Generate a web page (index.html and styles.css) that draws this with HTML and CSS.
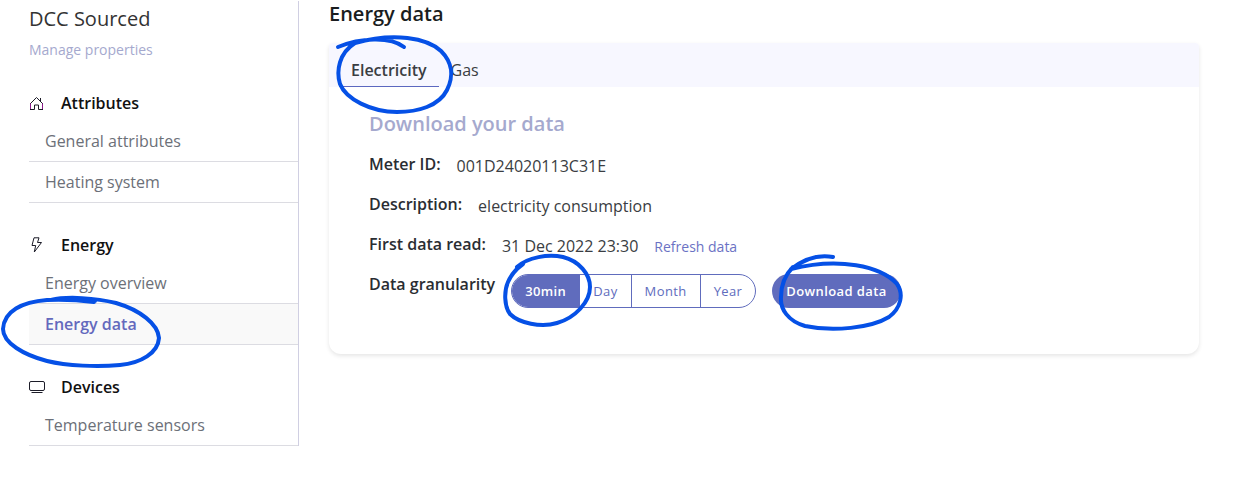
FILE: index.html
```html
<!DOCTYPE html>
<html lang="en">
<head>
<meta charset="utf-8">
<meta name="viewport" content="width=device-width, initial-scale=1">
<title>Energy data</title>
<link rel="stylesheet" href="styles.css">
</head>
<body>
<div class="page">
  <nav class="sidebar" aria-label="Property">
    <h2 class="property">DCC Sourced</h2>
    <a class="manage" href="#">Manage properties</a>
    <section class="group">
      <h3 class="group-title">
        <svg class="icon" viewBox="0 0 16 16" aria-hidden="true"><path stroke="#8c1a8c" d="M1.5 8v6M13.5 8v6"/><path d="M1 14.5h4.500v-4.500h4v4.500h4.500M1.500 8.500L7.500 2.500l6 6M11.500 6V3"/></svg>
        Attributes
      </h3>
      <ul class="items">
        <li><a class="item" href="#">General attributes</a></li>
        <li><a class="item" href="#">Heating system</a></li>
      </ul>
    </section>
    <section class="group">
      <h3 class="group-title">
        <svg class="icon" viewBox="0 0 16 16" aria-hidden="true"><path d="M5 .8h5L8.500 5.500h4L5.300 15l1.400-6.500H3z"/></svg>
        Energy
      </h3>
      <ul class="items">
        <li><a class="item" href="#">Energy overview</a></li>
        <li><a class="item active" href="#" aria-current="page">Energy data</a></li>
      </ul>
    </section>
    <section class="group">
      <h3 class="group-title">
        <svg class="icon" viewBox="0 0 16 16" aria-hidden="true"><rect x=".5" y="2.500" width="15" height="9" rx="1.500"/><path d="M2.500 13.500h11"/></svg>
        Devices
      </h3>
      <ul class="items">
        <li><a class="item" href="#">Temperature sensors</a></li>
      </ul>
    </section>
  </nav>
  <main class="main">
    <h1 class="title">Energy data</h1>
    <section class="card">
      <div class="tabs" role="tablist">
        <button class="tab selected" role="tab" aria-selected="true">Electricity</button>
        <button class="tab" role="tab" aria-selected="false">Gas</button>
      </div>
      <div class="content">
        <h2 class="subtitle">Download your data</h2>
        <dl class="details">
          <div class="row"><dt>Meter ID:</dt><dd>001D24020113C31E</dd></div>
          <div class="row"><dt>Description:</dt><dd>electricity consumption</dd></div>
          <div class="row"><dt>First data read:</dt><dd>31 Dec 2022 23:30</dd><dd><a class="refresh" href="#">Refresh data</a></dd></div>
        </dl>
        <div class="controls">
          <span class="label" id="granularity">Data granularity</span>
          <div class="segments" role="group" aria-labelledby="granularity">
            <button class="segment on" aria-pressed="true">30min</button>
            <button class="segment" aria-pressed="false">Day</button>
            <button class="segment" aria-pressed="false">Month</button>
            <button class="segment" aria-pressed="false">Year</button>
          </div>
          <button class="download">Download data</button>
        </div>
      </div>
    </section>
  </main>
  <svg class="marks" width="920" height="380" viewBox="0 0 920 380" aria-hidden="true">
    <path d="M338 47C360 38 390 36 404 47M355 43C394 32 427 38 441 51C452 62 454 76 447 90C439 106 418 112 397 112C371 112 346 99 340 84C336 71 339 53 355 43"/>
    <path d="M51 300C72 297 86 300 95 301M51 300C67 296 96 298 116 303C140 310 158 324 159 338C158 353 141 363 120 365C98 367 67 366 47 361C24 355 3 343 3 329C4 311 22 302 47 300Q70 299 94 302"/>
    <path d="M517 267C528 257 548 254 563 257C579 261 590 274 590 287C590 302 575 318 557 323C541 328 519 323 510 314C504 306 504 291 508 282C511 275 516 269 523 264"/>
    <path d="M833 257C817 254 804 259 791 269C839 257 881 266 897 284C904 294 901 308 889 317C871 328 833 332 805 326C788 321 780 309 781 297C781 285 785 275 793 267"/>
  </svg>
</div>
</body>
</html>
```
FILE: styles.css
```css
* { box-sizing: border-box; margin: 0; padding: 0; }
body {
  background: #fff;
  color: #3a3d42;
  font: 400 16px/24px "Open Sans", sans-serif;
}
a { text-decoration: none; }
ul { list-style: none; }
button { font: inherit; color: inherit; background: none; border: 0; cursor: pointer; }

.page {
  position: relative;
  display: flex;
  align-items: flex-start;
  gap: 30px;
  padding: 1px 37px 24px 29px;
}

.sidebar { flex: 0 0 270px; border-right: 1px solid #d0cfe2; }
.property { font-size: 20px; font-weight: 400; line-height: 36px; color: #333; }
.manage { display: block; font-size: 14px; line-height: 26px; color: #a5a9ce; }
.group { padding-top: 24px; }
.manage + .group { padding-top: 22px; }
.group-title {
  display: flex;
  align-items: center;
  gap: 16px;
  height: 36px;
  font-size: 16px;
  font-weight: 600;
  color: #111;
}
.icon { width: 16px; height: 16px; fill: none; stroke: #1c1c28; stroke-width: 1; }
.item {
  display: block;
  padding: 8px 16px;
  border-bottom: 1px solid #dcdce2;
  color: #6c7078;
}
.item.active { background: #f9f9f9; color: #6469bd; font-weight: 600; }

.main { flex: 1; min-width: 0; }
.title { font-size: 20px; font-weight: 600; line-height: 26px; margin-bottom: 16px; color: #1a1d20; }
.card {
  border-radius: 4px 4px 12px 12px;
  background: #fff;
  box-shadow: 0 2px 4px rgba(0, 0, 0, .1);
}
.tabs { display: flex; padding: 10px 10px 0; background: #f7f7ff; height: 44px; border-radius: 4px 4px 0 0; }
.tab { padding: 0 12px; border-bottom: 1px solid transparent; }
.tab.selected { border-color: #5c68c0; font-weight: 600; }

.content { padding: 17px 40px 42px; }
.subtitle { font-size: 20px; font-weight: 600; line-height: 40px; color: #a5a9ce; }
.row { display: flex; gap: 16px; height: 40px; }
dt, .label { font-weight: 600; line-height: 40px; color: #2a2d32; }
dd { line-height: 44px; }
.refresh { font-size: 14px; color: #6b72c4; }
.controls { display: flex; flex-wrap: wrap; gap: 0 16px; align-items: flex-end; padding-bottom: 4px; }
.label { margin-bottom: 4px; }
.segments {
  display: flex;
  height: 34px;
  border: 1px solid #606cbd;
  border-radius: 17px;
  overflow: hidden;
}
.segment { padding: 0 13px; font-size: 13px; letter-spacing: .03em; color: #606cbd; }
.segment + .segment { border-left: 1px solid #606cbd; }
.segment.on, .download { background: #606cbd; color: #fff; font-weight: 600; }
.download { height: 34px; padding: 0 14px; border-radius: 17px; font-size: 13px; letter-spacing: .03em; }

.marks {
  position: absolute;
  top: 0;
  left: 0;
  pointer-events: none;
  fill: none;
  stroke: #0550e6;
  stroke-width: 4;
  stroke-linecap: round;
  stroke-linejoin: round;
}
```
